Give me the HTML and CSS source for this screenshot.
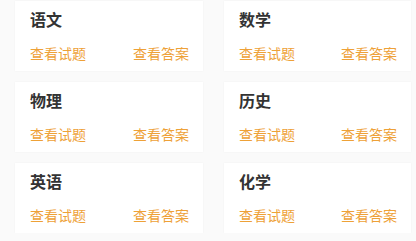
FILE: index.html
```html
<!DOCTYPE html>
<html lang="zh">
<head>
<meta charset="utf-8">
<link rel="stylesheet" href="styles.css">
</head>
<body>
<div class="grid">
  <div class="card"><div class="title">语文</div><div class="links"><span>查看试题</span><span>查看答案</span></div></div>
  <div class="card"><div class="title">数学</div><div class="links"><span>查看试题</span><span>查看答案</span></div></div>
  <div class="card"><div class="title">物理</div><div class="links"><span>查看试题</span><span>查看答案</span></div></div>
  <div class="card"><div class="title">历史</div><div class="links"><span>查看试题</span><span>查看答案</span></div></div>
  <div class="card"><div class="title">英语</div><div class="links"><span>查看试题</span><span>查看答案</span></div></div>
  <div class="card"><div class="title">化学</div><div class="links"><span>查看试题</span><span>查看答案</span></div></div>
</div>
</body>
</html>
```
FILE: styles.css
```css
html, body {
  margin: 0;
  background: #fafafa;
  font-family: "Noto Sans CJK SC", "Noto Sans", sans-serif;
}
.grid {
  display: grid;
  grid-template-columns: 188px 187px;
  column-gap: 21px;
  row-gap: 11px;
  padding: 1px 0 0 15px;
}
.card {
  background: #ffffff;
  height: 70px;
  box-sizing: border-box;
  padding: 7px 13px 8px 15px;
  box-shadow: 0 0 2px rgba(0, 0, 0, 0.04);
}
.title {
  font-size: 16px;
  font-weight: bold;
  color: #333333;
  line-height: 22px;
  margin-bottom: 13px;
}
.links {
  display: flex;
  justify-content: space-between;
  font-size: 14px;
  line-height: 20px;
  color: #eea137;
}
.links span:last-child {
  margin-right: 1px;
}
```
